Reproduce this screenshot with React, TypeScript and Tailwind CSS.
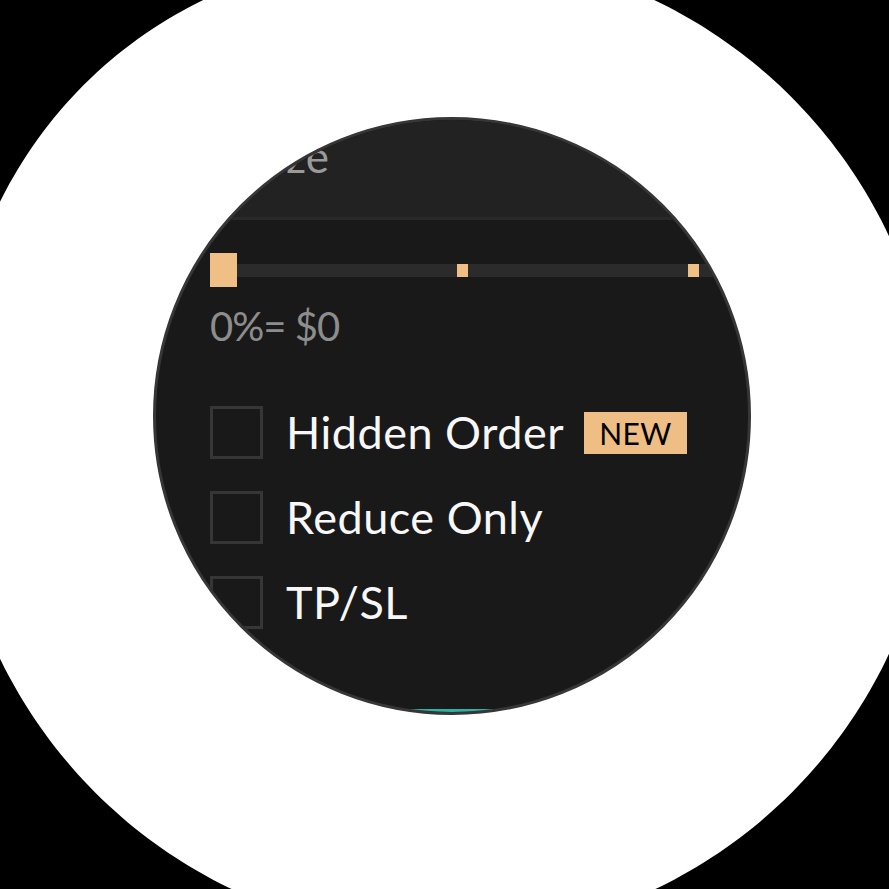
import React from "react";

function blobPoints(): string {
  const pts: string[] = [];
  for (let a = 0; a < 360; a += 1) {
    const d = (a - 225) / 36;
    const r = 492 + 17 * Math.exp(-d * d);
    const t = (a * Math.PI) / 180;
    pts.push(`${(443.5 + r * Math.cos(t)).toFixed(1)},${(445 + r * Math.sin(t)).toFixed(1)}`);
  }
  return pts.join(" ");
}

function Row({ label, badge }: { label: string; badge?: boolean }) {
  return (
    <div className="flex items-center h-[53px]">
      <div className="w-[53px] h-[53px] border-[3px] border-[#363636] shrink-0" />
      <span className="ml-[23px] text-[45px] leading-[45px] tracking-[0.5px] text-[#f7f7f7] whitespace-nowrap">
        {label}
      </span>
      {badge && (
        <span className="ml-[20px] w-[103px] h-[42px] bg-[#efbe84] text-black text-[30px] leading-[42px] tracking-[0.5px] flex items-center justify-center">
          NEW
        </span>
      )}
    </div>
  );
}

export default function App() {
  return (
    <div className="relative w-[889px] h-[889px] bg-black overflow-hidden font-['Lato',sans-serif]">
      <svg className="absolute inset-0" width={889} height={889} viewBox="0 0 889 889">
        <polygon points={blobPoints()} fill="#ffffff" />
      </svg>
      <div className="relative pl-[153px] pt-[117px]">
        <div className="w-[598px] h-[598px] rounded-full border-[3px] border-[#363636] bg-[#191919] overflow-hidden flex flex-col">
          <div className="h-[97px] bg-[#222222] pt-[14px] pl-[96px] shrink-0">
            <span className="text-[44px] leading-[44px] text-[#9a9a9a]">Size</span>
          </div>
          <div className="h-[3px] bg-[#292929] shrink-0" />
          <div className="pl-[54px] flex flex-col">
            <div className="mt-[33px] h-[34px] flex items-center">
              <div className="w-[27px] h-[34px] bg-[#f0bf85] shrink-0" />
              <div className="relative flex-1 h-[13px] bg-[#2b2b2b]">
                <div className="absolute left-[220px] top-0 w-[11px] h-[13px] bg-[#f0bf85]" />
                <div className="absolute left-[451px] top-0 w-[11px] h-[13px] bg-[#f0bf85]" />
              </div>
            </div>
            <div className="mt-[19px] text-[40px] leading-[40px] tracking-[-1px] text-[#8d8d8d]">0%= $0</div>
            <div className="mt-[60px] flex flex-col gap-[32px]">
              <Row label="Hidden Order" badge />
              <Row label="Reduce Only" />
              <Row label="TP/SL" />
            </div>
            <div className="mt-[80px] h-[60px] bg-[#2ab3a6] mr-[40px]" />
          </div>
        </div>
      </div>
    </div>
  );
}
